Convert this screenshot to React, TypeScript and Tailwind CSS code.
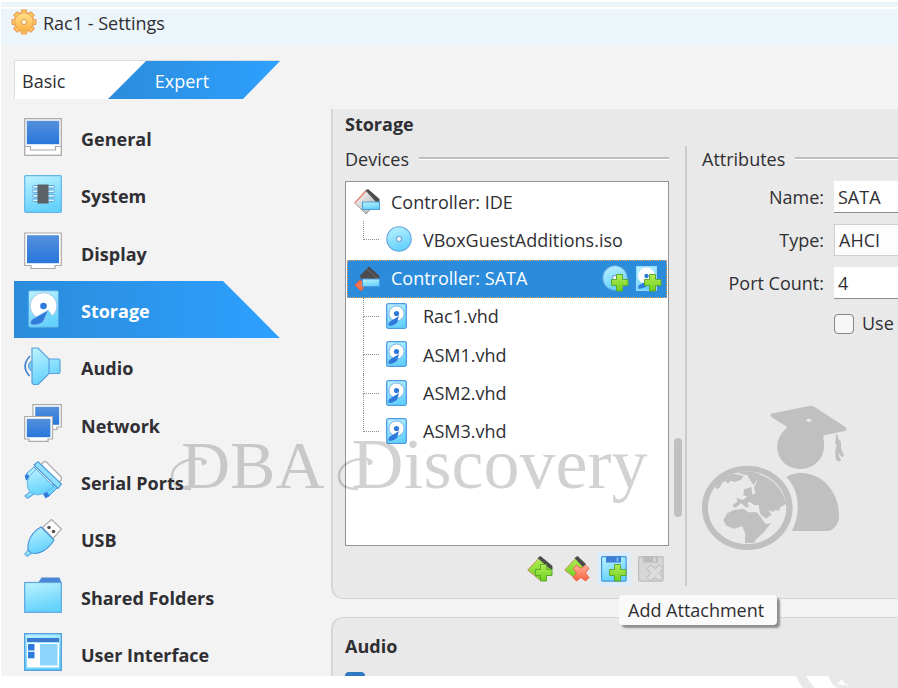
import React from "react";

const ink = "#2f2f33";

function Defs() {
  return (
    <svg className="absolute h-0 w-0" aria-hidden="true">
      <defs>
        <linearGradient id="cyan" x1="0" y1="0" x2="0.3" y2="1">
          <stop offset="0" stopColor="#bdf3ff" />
          <stop offset="1" stopColor="#66d2fc" />
        </linearGradient>
        <linearGradient id="blue" x1="0" y1="0" x2="0" y2="1">
          <stop offset="0" stopColor="#5590dc" />
          <stop offset="1" stopColor="#2777db" />
        </linearGradient>
        <linearGradient id="green" x1="0" y1="0" x2="0" y2="1">
          <stop offset="0" stopColor="#b4ee5a" />
          <stop offset="1" stopColor="#6cd01c" />
        </linearGradient>
        <linearGradient id="red" x1="0" y1="0" x2="0" y2="1">
          <stop offset="0" stopColor="#ffb09a" />
          <stop offset="1" stopColor="#f8603c" />
        </linearGradient>
        <linearGradient id="gold" x1="0" y1="0" x2="0" y2="1">
          <stop offset="0" stopColor="#ffe08c" />
          <stop offset="1" stopColor="#fbb445" />
        </linearGradient>
        <linearGradient id="grey" x1="0" y1="0" x2="1" y2="1">
          <stop offset="0" stopColor="#ffffff" />
          <stop offset="1" stopColor="#a8a8a8" />
        </linearGradient>
      </defs>
    </svg>
  );
}

function Icon({ children, size = "h-[38px] w-[38px]", box = "0 0 38 38" }: { children: React.ReactNode; size?: string; box?: string }) {
  return (
    <svg className={`${size} shrink-0`} viewBox={box} aria-hidden="true">
      {children}
    </svg>
  );
}

function Gear() {
  const teeth = [0, 45, 90, 135, 180, 225, 270, 315];
  return (
    <Icon size="h-[26px] w-[26px]" box="0 0 26 26">
      <g fill="#fdc765" stroke="#e9994a" strokeWidth="1" strokeLinejoin="round">
        {teeth.map((a) => (
          <path key={a} d="M9.500 6 L10.600 1 H15.400 L16.500 6 Z" transform={`rotate(${a} 13 13)`} />
        ))}
        <circle cx="13" cy="13" r="9" />
      </g>
      <circle cx="13" cy="13" r="8.700" fill="url(#gold)" />
      <circle cx="13" cy="13" r="2.600" fill="#fff6e0" stroke="#e39a4c" />
    </Icon>
  );
}

function Disk() {
  return (
    <>
      <rect x="4.5" y="0.7" width="30" height="36.6" rx="1.5" fill="url(#cyan)" stroke="#55a6e4" strokeWidth="1" />
      <circle cx="19.5" cy="16" r="13.4" fill="#fff" stroke="#8dbde8" strokeWidth="0.8" />
      <circle cx="19.5" cy="16" r="3.3" fill="#2f7bdc" />
      <path d="M24 20 L29 26 L22 31 L19 30 Z" fill="#6fd5fb" />
      <path d="M24.500 20 L19 32 C16 34.500 10 36 7 34.500 C5.500 32 7 30 9.500 28.500 Z" fill="#2f7bdc" stroke="#8ec9f5" strokeWidth="0.8" />
    </>
  );
}

function SmallDisk() {
  return (
    <>
      <rect x="0.700" y="0.700" width="19.600" height="24.600" rx="1.500" fill="url(#cyan)" stroke="#4d9be3" strokeWidth="1.300" />
      <circle cx="10.500" cy="10.500" r="7.600" fill="#fff" stroke="#7db2e8" />
      <circle cx="10.500" cy="10.500" r="2.600" fill="#2f7bdc" />
      <path d="M13 13 L11 20 Q5 24 2.500 22.500 Q2 20 4 18.500 Z" fill="#2f7bdc" />
    </>
  );
}

const Plus = ({ x, y }: { x: number; y: number }) => (
  <path
    transform={`translate(${x} ${y})`}
    d="M5.500 0.500 H11.500 V5.500 H17 V11.500 H11.500 V17 H5.500 V11.500 H0.500 V5.500 H5.500 Z"
    fill="url(#green)"
    stroke="#5da832"
  />
);
const Cross = ({ x, y, fill = "url(#red)", line = "#e86a50" }: { x: number; y: number; fill?: string; line?: string }) => (
  <path
    transform={`translate(${x} ${y})`}
    d="M4 0.500 L8.500 4 L13 0.500 L16.500 4 L13 8.500 L16.500 13 L13 16.500 L8.500 13 L4 16.500 L0.500 13 L4 8.500 L0.500 4 Z"
    fill={fill}
    stroke={line}
    strokeLinejoin="round"
  />
);

const icons: Record<string, React.ReactNode> = {
  General: (
    <>
      <rect x="0.700" y="0.700" width="36.600" height="36.600" fill="#fff" stroke="#aaa" strokeWidth="1.300" />
      <rect x="2.500" y="2.500" width="33" height="24" fill="url(#blue)" stroke="#d4e3f8" />
      <path d="M1 28.500 H6.500 V32 H31.500 V28.500 H37" fill="none" stroke="#aaa" strokeWidth="1.200" />
    </>
  ),
  System: (
    <>
      <rect x="0.700" y="0.700" width="36.600" height="36.600" rx="1" fill="url(#cyan)" stroke="#63b4e8" strokeWidth="1.200" />
      {[10.500, 15, 19.500, 24].map((y) => (
        <rect key={y} x="8.500" y={y} width="22" height="2.600" rx="1.200" fill="#d9f7ff" stroke="#5a9fd4" strokeWidth="0.900" />
      ))}
      <rect x="13.500" y="9.500" width="11" height="19" fill="#5c6168" />
    </>
  ),
  Display: (
    <>
      <path d="M0.700 1 H37.300 V33.500 H31 V36.500 H7 V33.500 H0.700 Z" fill="#fff" stroke="#aaa" strokeWidth="1.200" />
      <rect x="3" y="3.200" width="32" height="28" fill="url(#blue)" />
    </>
  ),
  Storage: <Disk />,
  Audio: (
    <>
      <path d="M6 9 Q-3.500 19 5.500 29" fill="none" stroke="#4687cf" strokeWidth="1.700" />
      <circle cx="10" cy="19" r="5.500" fill="#79cdf6" stroke="#5794cf" />
      <path d="M8 1 H14 L25 12 H34.500 Q36 12 36 13.500 V25 Q36 26.500 34.500 26.500 H25 L14 37.500 H9.500 L8 36 Z" fill="url(#cyan)" stroke="#5aa0db" strokeWidth="1.200" />
      <path d="M25 12 V26.500" stroke="#5aa0db" strokeWidth="1.200" />
    </>
  ),
  Network: (
    <>
      <path d="M9 0.700 H37.300 V23 H33 V25.500 H13 V23 H9 Z" fill="#fff" stroke="#aaa" strokeWidth="1.200" />
      <rect x="11.200" y="2.800" width="24" height="18" fill="url(#blue)" />
      <path d="M0.700 12.500 H28.500 V35 H24 V37.400 H5 V35 H0.700 Z" fill="#fff" stroke="#aaa" strokeWidth="1.200" />
      <rect x="2.800" y="14.800" width="23.600" height="18.400" fill="url(#blue)" />
    </>
  ),
  "Serial Ports": (
    <>
      <path d="M17 4 L20 0.700 H22 L37.300 16 V19 L34 22 Z" fill="#fff" stroke="#aaa" strokeWidth="1.200" />
      <path d="M2 13 L10 6 L14 10 L6 18 Z M19 32 L29 23 L34 26 L24 36 Z" fill="url(#cyan)" stroke="#4b95da" />
      <path d="M0.700 14.500 L3.500 13 L6.500 17 L2 19.500 Z M19 33 L23 31 L25.500 34.500 L21.500 37.500 Z" fill="#2f7bdc" />
      <path d="M7 30 L10 33 L3.500 37.500 L0.700 35 Z" fill="url(#cyan)" stroke="#4b95da" />
      <path d="M12 8 L30 26 L20 32 C15 35 10 34 6 31 C2 26 3 20 5 16 Z" fill="url(#cyan)" stroke="#67b4e8" />
      <path d="M10 4 L14 0.700 L37.500 23 L34 27.500 Z" fill="#8fe0fb" stroke="#4b95da" strokeWidth="1.100" />
    </>
  ),
  USB: (
    <>
      <path d="M18.500 8.500 L27.500 0.500 L37.500 10 L29 19.500 Z" fill="#fff" stroke="#aaa" strokeWidth="1.200" />
      <circle cx="25" cy="8.500" r="1.800" fill="#555" />
      <circle cx="29.500" cy="12.500" r="1.800" fill="#555" />
      <path d="M4 31 L7.500 34.500 L3 37.500 L0.700 35 Z" fill="url(#cyan)" stroke="#5aa0db" />
      <path d="M17 8 L30 21 C24 31 15 36 7 34 L4 31 C3 22 8 13 17 8 Z" fill="url(#cyan)" stroke="#4b95da" strokeWidth="1.100" />
    </>
  ),
  "Shared Folders": (
    <>
      <path d="M14 7 L17.500 1.500 H35.500 L37.500 7 Z" fill="#4c86d6" />
      <rect x="0.700" y="6.500" width="36.600" height="29.800" fill="url(#cyan)" stroke="#5aa6e0" strokeWidth="1.200" />
    </>
  ),
  "User Interface": (
    <>
      <rect x="0.700" y="0.700" width="36.600" height="36.600" fill="url(#cyan)" stroke="#56a2e0" strokeWidth="1.400" />
      <rect x="3" y="5" width="32" height="4" fill="#3d79cc" />
      <rect x="3" y="10" width="32" height="24.500" fill="#fff" />
      <rect x="4" y="11" width="6.500" height="6.500" fill="#2f7bdc" />
      <rect x="4" y="18.800" width="6.500" height="6.500" fill="#2f7bdc" />
      <rect x="16" y="11" width="17.500" height="21.500" fill="#8cd6fd" />
    </>
  ),
};

function NavItem({ label, active }: { label: string; active?: boolean }) {
  return (
    <button
      type="button"
      aria-current={active ? "page" : undefined}
      className={
        active
          ? "flex w-full items-center gap-[19px] bg-linear-to-r from-[#2b8cdb] to-[#2da0ff] pb-0.5 pl-2.5 text-left text-[18px] font-bold text-white [clip-path:polygon(0_0,209px_0,100%_100%,0_100%)]"
          : "flex w-full items-center gap-[19px] pb-0.5 pl-2.5 text-left text-[18px] font-bold"
      }
    >
      <Icon>{icons[label]}</Icon>
      <span className="pt-1.5">{label}</span>
    </button>
  );
}

function Heading({ children }: { children: React.ReactNode }) {
  return (
    <h3 className="flex items-center gap-2.5 text-[18px] leading-6">
      {children}
      <span className="mb-0.5 h-[3px] flex-1 border-b border-white bg-[#bfc0c1]" />
    </h3>
  );
}

function Controller({ sata }: { sata?: boolean }) {
  return (
    <Icon size="h-[26px] w-[26px]" box="0 0 26 26">
      {sata ? (
        <>
          <path d="M6 14 L12 19 L7 25 L0.700 19 Z" fill="#f37450" stroke="#d9604a" />
          <path d="M15 0.500 L25.500 10 V14 H8 L5.500 10 Z" fill="#4c4c4e" />
          <path d="M13 3 L24 13" stroke="#6a6a6c" />
        </>
      ) : (
        <>
          <path d="M12 1 L24 12 L12 25 L0.700 14 Z" fill="url(#grey)" stroke="#999" />
          <path d="M0.700 14 L12 2" stroke="#f28b72" strokeWidth="1.300" />
          <path d="M11.500 1.500 L14 0 L25.500 10 V13 H22 Z" fill="#4c4c4e" />
        </>
      )}
      <rect x="8.500" y="13" width="17" height="7.500" fill="url(#cyan)" stroke="#4c9bdd" />
    </Icon>
  );
}

function Disc() {
  return (
    <>
      <circle cx="13" cy="13" r="12.200" fill="url(#cyan)" stroke="#62a5de" strokeWidth="1.100" />
      <circle cx="13" cy="13" r="2.600" fill="#fff" stroke="#7aa9d8" strokeWidth="1.300" />
    </>
  );
}

function Branch({ kind }: { kind: "mid" | "last" }) {
  return (
    <span aria-hidden="true" className="flex w-4 flex-col self-stretch">
      <span className="h-1/2 border-b border-l border-dotted border-[#8d8d8d]" />
      <span className={kind === "mid" ? "h-1/2 border-l border-dotted border-[#8d8d8d]" : "h-1/2"} />
    </span>
  );
}

function DiskRow({ name, last }: { name: string; last?: boolean }) {
  return (
    <li role="treeitem" className="flex items-center pl-4">
      <Branch kind={last ? "last" : "mid"} />
      <span className="flex w-11 pb-0.5 pl-[7px]">
        <Icon size="h-[26px] w-[21px]" box="0 0 21 26">
          <SmallDisk />
        </Icon>
      </span>
      {name}
    </li>
  );
}

function Tree() {
  return (
    <div className="h-[365px] border border-[#8f959b] bg-white p-px">
      <ul role="tree" aria-label="Devices" className="grid h-[268px] grid-rows-7">
        <li role="treeitem" className="flex items-center gap-[11px] pl-[7px]">
          <Controller />
          Controller: IDE
        </li>
        <li role="treeitem" className="flex items-center pl-4">
          <Branch kind="last" />
          <span className="flex w-11 pb-0.5 pl-[7px]">
            <Icon size="h-[26px] w-[26px]" box="0 0 26 26">
              <Disc />
            </Icon>
          </span>
          VBoxGuestAdditions.iso
        </li>
        <li
          role="treeitem"
          aria-selected="true"
          className="flex items-center gap-[11px] border border-dotted border-[#f0a060] bg-[#2b8cdb] pr-1 pl-[6px] text-white"
        >
          <Controller sata />
          <span className="flex-1">Controller: SATA</span>
          <span className="flex gap-1">
            <button type="button" aria-label="Add optical drive">
              <Icon size="h-7 w-7" box="0 0 28 28">
                <Disc />
                <Plus x={9} y={9} />
              </Icon>
            </button>
            <button type="button" aria-label="Add hard disk">
              <Icon size="h-7 w-7" box="0 0 28 28">
                <rect x="2.500" y="1.500" width="20" height="24" fill="url(#cyan)" stroke="#9cd8f8" />
                <circle cx="12.500" cy="11" r="8.500" fill="#fff" />
                <circle cx="12.500" cy="11" r="2.200" fill="#2f7bdc" />
                <path d="M14 15 L12 22 L5 24 L4 21 Z" fill="#2f7bdc" />
                <Plus x={10} y={9} />
              </Icon>
            </button>
          </span>
        </li>
        <DiskRow name="Rac1.vhd" />
        <DiskRow name="ASM1.vhd" />
        <DiskRow name="ASM2.vhd" />
        <DiskRow name="ASM3.vhd" last />
      </ul>
    </div>
  );
}

function Toolbar() {
  return (
    <div className="flex justify-end gap-[3px] pt-1.5 pr-px">
      <button type="button" aria-label="Add Controller" className="p-1">
        <Icon size="h-[26px] w-[26px]" box="0 0 26 26">
          <path d="M13 1 L25 13 L14 25 L0.700 14 Z" fill="url(#green)" stroke="#c78f58" />
          <path d="M10.500 2 L13.500 0 L25.500 10 V13.500 L22 12 Z" fill="#4a4a4a" />
          <Plus x={8} y={8} />
        </Icon>
      </button>
      <button type="button" aria-label="Remove Controller" className="p-1">
        <Icon size="h-[26px] w-[26px]" box="0 0 26 26">
          <path d="M13 1 L22 12 L12 23 L0.700 14 Z" fill="url(#green)" stroke="#c78f58" />
          <path d="M10.500 2 L13.500 0 L22 8 L19 11 Z" fill="#4a4a4a" />
          <Cross x={8.5} y={8.5} />
        </Icon>
      </button>
      <button type="button" aria-label="Add Attachment" className="rounded-sm bg-[#dcecfa] p-1">
        <Icon size="h-[26px] w-[26px]" box="0 0 26 26">
          <rect x="0.600" y="0.600" width="24.500" height="24.500" rx="1" fill="url(#cyan)" stroke="#4296da" strokeWidth="1.200" />
          <rect x="5" y="0.500" width="15" height="6" fill="#3c7fd4" />
          <rect x="15.500" y="1.500" width="2" height="4" fill="#7fb8ee" />
          <Plus x={8} y={8} />
        </Icon>
      </button>
      <button type="button" aria-label="Remove Attachment" disabled className="p-1">
        <Icon size="h-[26px] w-[26px]" box="0 0 26 26">
          <rect x="0.600" y="0.600" width="24.500" height="24.500" rx="1" fill="#d6d6d6" stroke="#bdbdbd" strokeWidth="1.200" />
          <rect x="5" y="0.500" width="15" height="6" fill="#bcbcbc" />
          <rect x="15.500" y="1.500" width="2" height="4" fill="#dedede" />
          <Cross x={8.5} y={8.5} fill="#dcdcdc" line="#b8b8b8" />
        </Icon>
      </button>
    </div>
  );
}

function Attributes() {
  return (
    <section className="min-w-0 flex-1 pl-[15px]">
      <Heading>Attributes</Heading>
      <div className="grid grid-cols-[122px_1fr] items-center gap-x-2.5 gap-y-[11px] pt-2.5 text-[18px]">
        <label htmlFor="name" className="text-right">Name:</label>
        <input id="name" defaultValue="SATA" className="h-8 w-full min-w-0 border-b border-[#8c8c8c] bg-white px-1" />
        <label htmlFor="type" className="text-right">Type:</label>
        <select id="type" className="h-8 w-full min-w-0 appearance-none border border-r-0 border-[#d0d0d0] bg-[#fdfdfd] px-1">
          <option>AHCI</option>
        </select>
        <label htmlFor="ports" className="text-right">Port Count:</label>
        <input id="ports" defaultValue="4" className="h-8 w-full min-w-0 border-b border-[#8c8c8c] bg-white px-1" />
        <label className="col-start-2 flex items-center gap-2 whitespace-nowrap">
          <input type="checkbox" className="h-5 w-5 shrink-0 appearance-none rounded-sm border border-[#858585] bg-[#f6f6f6]" />
          Use
        </label>
      </div>
    </section>
  );
}

function Watermark() {
  return (
    <div className="pointer-events-none absolute top-[402px] left-[170px] text-black opacity-18 select-none">
      <div className="absolute top-[18px] left-[11px] flex items-baseline gap-[27px] [font-family:'Liberation_Serif',serif] leading-[88px] whitespace-nowrap">
        <span className="text-[68px]">DBA</span>
        <span className="text-[72px]">Discovery</span>
      </div>
      <svg className="absolute top-[36px] left-0 h-[84px] w-[520px]" viewBox="0 0 520 84" aria-hidden="true">
        <g fill="none" stroke="currentColor" strokeWidth="2.500" strokeLinecap="round">
          <path d="M33 26 C37 23 32 20 25 21 C11 22 2 30 2 38 C2 48 11 51 20 51" />
          <path d="M199 26 C203 23 198 20 191 21 C177 22 169 30 169 38 C169 48 178 51 187 51" />
        </g>
        <circle cx="34" cy="24" r="2.600" fill="currentColor" />
        <circle cx="200" cy="24" r="2.600" fill="currentColor" />
        <rect x="504" y="0" width="8" height="79" rx="4" fill="currentColor" />
      </svg>
      <svg className="absolute top-px left-[530px] h-[150px] w-[150px]" viewBox="120 39 450 450" aria-hidden="true">
        <g fill="currentColor" fillRule="evenodd">
          <path d="M332 71 L452 47 Q458 47 464 51 L556 111 Q562 116 558 122 L491 136 Q489 142 491 150 C500 200 465 237 421 237 C372 237 345 195 353 156 Q358 133 382 111 L335 82 Q330 76 332 71 Z M439 91 A8 5 0 1 0 455 91 A8 5 0 1 0 439 91 Z" />
          <path d="M529 130 Q536 140 535 147 Q544 152 543 162 Q542 182 551 192 L550 202 Q541 201 538 190 Q534 202 543 208 L541 214 Q528 216 527 203 Q524 180 530 168 Q523 160 527 150 Z" />
          <path d="M379 261 C395 250 420 247 443 251 C505 262 540 325 537 382 C535 406 520 423 500 423 H396 C425 363 417 300 379 261 Z" />
          <path d="M262 227 C337 227 398 283 398 353 C398 424 337 480 262 480 C187 480 126 424 126 353 C126 283 187 227 262 227 Z M262 244 C197 244 144 293 144 353 C144 414 197 462 262 462 C325 462 379 414 379 353 C379 293 325 244 262 244 Z" />
          <path d="M165 292 L180 270 L195 260 L218 251 L251 257 L242 270 L224 276 L214 272 L203 280 L195 273 L185 280 L180 292 L172 298 Z" />
          <path d="M231 248 Q270 238 300 252 L302 286 L289 282 L292 268 L281 286 L274 276 L262 256 Z" />
          <path d="M302 254 Q360 275 379 341 L361 352 L356 363 L346 359 L339 366 L325 359 L335 374 L318 386 L300 371 L296 345 L282 345 L270 335 L262 340 L268 350 L258 352 L244 340 L224 354 L217 346 L232 335 L230 323 L248 330 L262 320 L250 315 L252 298 L274 291 L277 314 L286 309 L282 292 Z" />
          <path d="M221 360 L250 356 L265 367 L290 367 L300 378 L317 402 L333 400 L310 428 L290 446 L281 459 H255 L256 431 L247 409 L221 416 L199 407 L190 390 L202 370 Z" />
        </g>
      </svg>
    </div>
  );
}

const sections = ["General", "System", "Display", "Storage", "Audio", "Network", "Serial Ports", "USB", "Shared Folders", "User Interface"];

export default function App() {
  return (
    <div
      className="relative flex h-screen flex-col overflow-hidden bg-white pt-0.5 pb-3 pl-px [font-family:'Open_Sans','Noto_Sans',sans-serif]"
      style={{ color: ink }}
    >
      <Defs />
      <div className="h-[5px] shrink-0 bg-[#ecf5fa]" />
      <header className="mt-0.5 flex h-[37px] shrink-0 items-start gap-1.5 bg-[#ecf5fa] pl-2.5">
        <Gear />
        <h1 className="text-[18px] leading-7">Rac1 - Settings</h1>
      </header>
      <div className="flex min-h-0 flex-1 overflow-hidden bg-[#f3f3f3]">
        <aside className="w-[330px] shrink-0 pt-3.5 pl-[13px]">
          <div role="tablist" className="grid h-[39px] w-[266px] grid-cols-[93px_172px] border border-r-0 border-b-0 border-[#dcdcdc] bg-linear-to-r from-white from-55% to-[#f3f3f3] to-55% text-[18px]">
            <button type="button" role="tab" className="pt-0.5 pl-[7px] text-left">Basic</button>
            <button
              type="button"
              role="tab"
              aria-selected="true"
              className="bg-linear-to-r from-[#2b8cdb] to-[#2da0ff] pt-0.5 pr-6 text-white [clip-path:polygon(38px_0,100%_0,135px_100%,0_100%)]"
            >
              Expert
            </button>
          </div>
          <nav aria-label="Settings sections" className="mt-2.5 grid h-[573px] w-[266px] grid-rows-10">
            {sections.map((s) => (
              <NavItem key={s} label={s} active={s === "Storage"} />
            ))}
          </nav>
        </aside>
        <main className="min-w-0 flex-1 pt-[63px]">
          <section className="flex h-[490px] flex-col rounded-bl-xl border-b border-l-2 border-[#d6d6d6] bg-[#e9e9e9] pl-3">
            <h2 className="pt-[3px] text-[18px] leading-6 font-bold">Storage</h2>
            <div className="flex">
              <section className="w-[324px] shrink-0 pt-[11px]">
                <Heading>Devices</Heading>
                <div className="h-2.5" />
                <div className="text-[18px]">
                  <Tree />
                </div>
                <Toolbar />
              </section>
              <div className="mt-2.5 ml-4 flex h-[440px] min-w-0 flex-1 border-l-2 border-[#cccccc] pt-px">
                <Attributes />
              </div>
            </div>
          </section>
          <section className="mt-[18px] h-40 rounded-tl-xl border-t border-l-2 border-[#d6d6d6] bg-[#e9e9e9] pl-3">
            <h2 className="pt-4 text-[18px] leading-6 font-bold">Audio</h2>
            <input type="checkbox" defaultChecked aria-label="Enable Audio" className="mt-3.5 block h-5 w-5 appearance-none rounded-sm bg-[#2f78c4]" />
          </section>
        </main>
      </div>
      <Watermark />
      <svg className="absolute right-0 bottom-0 h-3 w-[102px]" viewBox="0 0 102 12" aria-hidden="true">
        <path d="M0 0 H10 Q14 7 19 12 H7 Q3 7 0 0 Z M32 0 H102 V12 H42 L37 9 Z" fill="#e8e8e8" />
        <path d="M41 8 L46 3 L48 7 L55 10 L48 9 Z" fill="#fff" />
      </svg>
      <div role="tooltip" className="absolute top-[595px] left-[619px] w-[158px] rounded-sm bg-[#fafafa] pl-[9px] text-[18px] leading-[30px] whitespace-nowrap shadow-[3px_3px_2px_#8f8f8f]">
        Add Attachment
      </div>
    </div>
  );
}
